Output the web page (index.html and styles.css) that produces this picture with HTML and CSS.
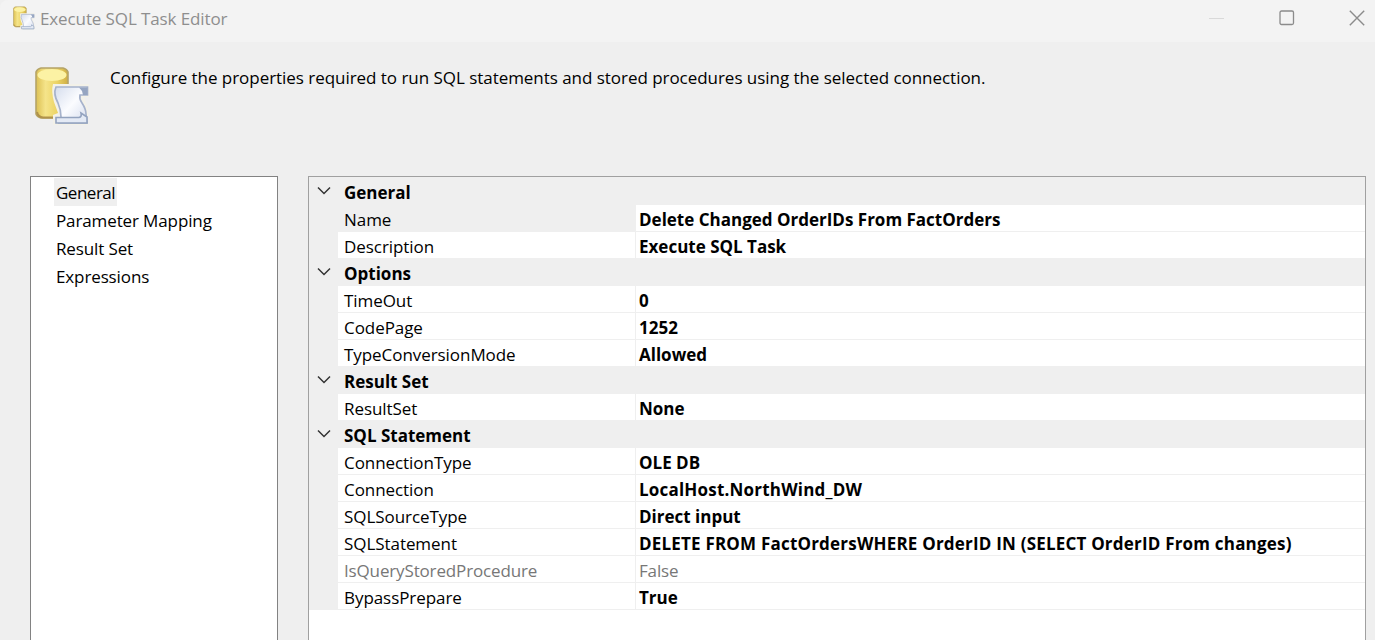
FILE: index.html
```
<!DOCTYPE html>
<html lang="en">
<head>
<meta charset="utf-8">
<title>Execute SQL Task Editor</title>
<link rel="stylesheet" href="styles.css">
</head>
<body>
<svg class="defs" aria-hidden="true">
  <defs>
    <linearGradient id="gold" x1="0" x2="1"><stop offset="0" stop-color="#dcc052"/><stop offset=".3" stop-color="#f5e48a"/><stop offset=".65" stop-color="#ecd465"/><stop offset="1" stop-color="#cfae44"/></linearGradient>
    <linearGradient id="paper" x1="0" x2="1" y1="0" y2="1"><stop offset="0" stop-color="#d5dded"/><stop offset=".5" stop-color="#fbfcff"/><stop offset="1" stop-color="#d3dbec"/></linearGradient>
    <symbol id="task" viewBox="0 0 56 60">
      <path d="M3 6Q4 3 8 2H30Q34 3 35 6V48Q34 51 29 52H8Q4 51 3 48Z" fill="url(#gold)" stroke="#b5a468" stroke-width="1.600"/>
      <ellipse cx="19" cy="9" rx="14.500" ry="6" fill="#fcf2a4"/>
      <path d="M4 46Q5 51 10 51.500H23" fill="none" stroke="#b0924a" stroke-width="2"/>
      <path d="M20 18H56V31H51L55 43V59H20V49L25 47L21 36Q18 25 20 18Z" fill="#f3f1e8"/>
      <path d="M23 21H54.500V29H47Q46 33 49 37Q53 43 53 48L54 57H26L28 51Q28 44 25 37Q20 28 23 21Z" fill="url(#paper)" stroke="#a6b2cb" stroke-width="1.700"/>
      <path d="M46 21.500H54.500V29H50L49 25Z" fill="#96a5c1"/>
      <path d="M23 51.500H46Q49 51 48 47L54 51V57H23Z" fill="#e4eaf5" stroke="#93a3bf" stroke-width="1.600"/>
    </symbol>
    <symbol id="chev" viewBox="0 0 14 9"><path d="M1 1.500L7 7.500L13 1.500" fill="none" stroke="#333" stroke-width="1.500"/></symbol>
  </defs>
</svg>
<div class="window">
  <header class="titlebar">
    <svg class="title-icon"><use href="#task"/></svg>
    <span class="title">Execute SQL Task Editor</span>
    <div class="controls">
      <svg width="16" height="16" viewBox="0 0 16 16"><path d="M0 8.500H15" stroke="#d9d9d9"/></svg>
      <svg width="16" height="16" viewBox="0 0 16 16"><rect x="1" y="1" width="13.500" height="13.500" rx="1.500" fill="none" stroke="#8b8b8b" stroke-width="1.300"/></svg>
      <svg width="16" height="16" viewBox="0 0 16 16"><path d="M.8 .8L15.200 15.200M15.200 .8L.8 15.200" stroke="#8b8b8b" stroke-width="1.400"/></svg>
    </div>
  </header>
  <section class="intro">
    <svg class="intro-icon"><use href="#task"/></svg>
    <p class="intro-text">Configure the properties required to run SQL statements and stored procedures using the selected connection.</p>
  </section>
  <main class="content">
    <nav class="pages">
      <span class="page selected">General</span>
      <span class="page">Parameter Mapping</span>
      <span class="page">Result Set</span>
      <span class="page">Expressions</span>
    </nav>
    <div class="grid">
      <div class="group"><svg class="chev"><use href="#chev"/></svg><b>General</b></div>
      <div class="row active"><span class="key">Name</span><span class="value">Delete Changed OrderIDs From FactOrders</span></div>
      <div class="row"><span class="key">Description</span><span class="value">Execute SQL Task</span></div>
      <div class="group"><svg class="chev"><use href="#chev"/></svg><b>Options</b></div>
      <div class="row"><span class="key">TimeOut</span><span class="value">0</span></div>
      <div class="row"><span class="key">CodePage</span><span class="value">1252</span></div>
      <div class="row"><span class="key">TypeConversionMode</span><span class="value">Allowed</span></div>
      <div class="group"><svg class="chev"><use href="#chev"/></svg><b>Result Set</b></div>
      <div class="row"><span class="key">ResultSet</span><span class="value">None</span></div>
      <div class="group"><svg class="chev"><use href="#chev"/></svg><b>SQL Statement</b></div>
      <div class="row"><span class="key">ConnectionType</span><span class="value">OLE DB</span></div>
      <div class="row"><span class="key">Connection</span><span class="value connection">LocalHost.NorthWind_DW</span></div>
      <div class="row"><span class="key">SQLSourceType</span><span class="value">Direct input</span></div>
      <div class="row"><span class="key">SQLStatement</span><span class="value statement">DELETE FROM FactOrdersWHERE OrderID IN (SELECT OrderID From changes)</span></div>
      <div class="row disabled"><span class="key">IsQueryStoredProcedure</span><span class="value">False</span></div>
      <div class="row"><span class="key">BypassPrepare</span><span class="value">True</span></div>
    </div>
  </main>
</div>
</body>
</html>
```
FILE: styles.css
```
* { box-sizing: border-box; }
body { margin: 0; background: #efefef; color: #000; font: 17px/26px "Open Sans", "Noto Sans", sans-serif; }
.defs { position: absolute; width: 0; height: 0; }
.window { height: 640px; display: flex; flex-direction: column; overflow: hidden; border-top-left-radius: 8px; white-space: nowrap; }
.titlebar { height: 42px; flex: none; display: flex; align-items: flex-start; padding: 6px 10px 0 12px; background: #f3f3f3; color: #8e8e8e; }
.title-icon { width: 23px; height: 24px; margin-right: 5px; }
.title { letter-spacing: -.11px; }
.controls { display: flex; gap: 54px; margin: 4px 0 0 auto; }
.intro { height: 134px; flex: none; display: flex; padding: 24px 0 0 33px; }
.intro-icon { width: 56px; height: 60px; margin-right: 21px; }
.intro-text { margin: -1px 0 0; letter-spacing: -.04px; }
.content { flex: 1; display: flex; gap: 30px; padding: 0 9px 0 30px; }
.pages { width: 248px; display: flex; flex-direction: column; align-items: flex-start; padding: 1px 0 0 23px; background: #fff; border: 1px solid #828282; border-bottom: 0; }
.page { height: 28px; line-height: 30px; padding: 0 2px; letter-spacing: -.12px; }
.selected { letter-spacing: -.5px; background: #efefef; }
.grid { width: 1058px; background: #fff; border: 1px solid #a0a0a0; border-bottom: 0; }
.group { height: 27px; display: flex; align-items: center; background: #efefef; padding: 2px 0 0 9px; }
.group:first-child { height: 28px; padding-top: 3px; }
.chev { width: 14px; height: 9px; margin: -4px 13px 0 -1px; }
.row { height: 27px; line-height: 29px; display: grid; grid-template: 26px / 298px 1fr; border-left: 29px solid #efefef; border-bottom: 1px solid #efefef; }
.key { padding-left: 6px; border-right: 1px solid #efefef; letter-spacing: -.06px; }
.value { padding-left: 3px; font-weight: 700; }
.connection, .statement { letter-spacing: .2px; }
.active .key { background: #efefef; }
.disabled .key, .disabled .value { color: #777; font-weight: 400; letter-spacing: -.15px; }
```
